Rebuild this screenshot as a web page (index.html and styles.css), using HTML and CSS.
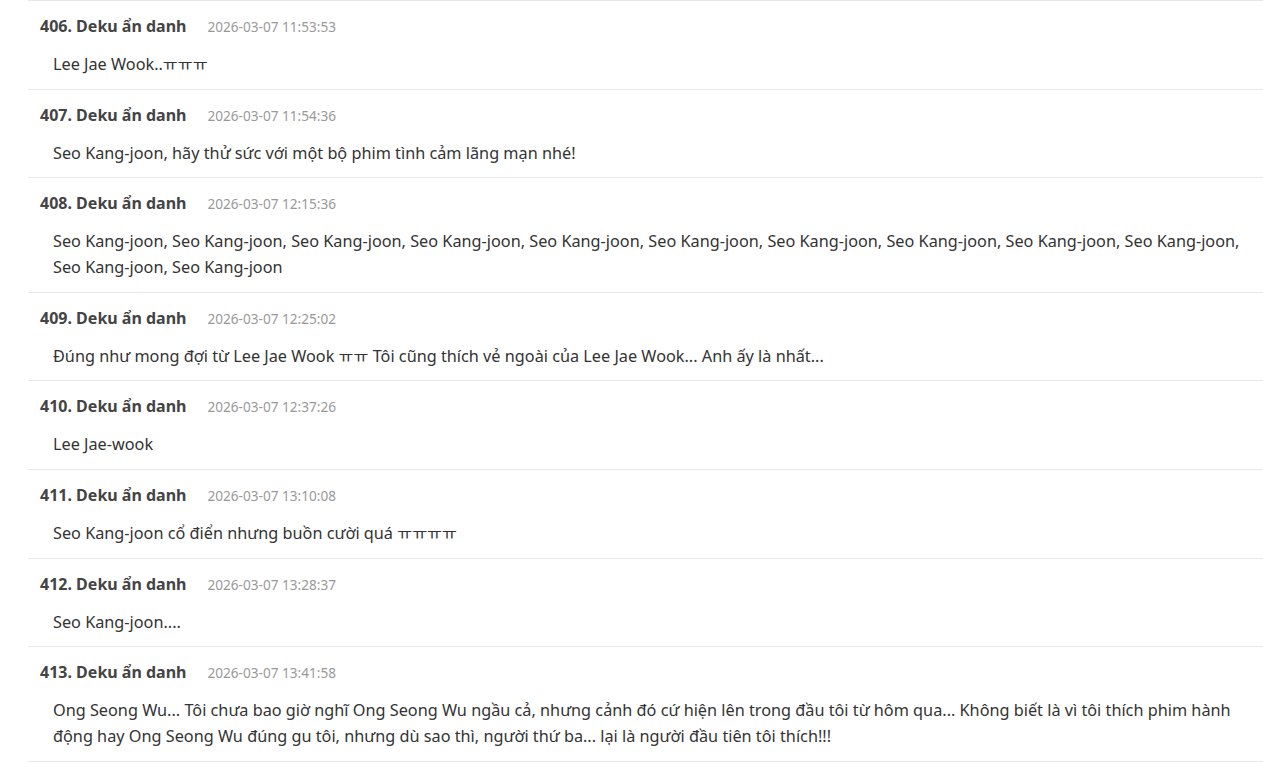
FILE: index.html
```html
<!DOCTYPE html>
<html lang="vi">
<head>
<meta charset="utf-8">
<link rel="stylesheet" href="styles.css">
</head>
<body>
<ul class="comments">
  <li class="comment first">
    <div class="meta"><span class="name">406. Deku ẩn danh</span><span class="date">2026-03-07 11:53:53</span></div>
    <p class="text">Lee Jae Wook..ㅠㅠㅠ</p>
  </li>
  <li class="comment">
    <div class="meta"><span class="name">407. Deku ẩn danh</span><span class="date">2026-03-07 11:54:36</span></div>
    <p class="text">Seo Kang-joon, hãy thử sức với một bộ phim tình cảm lãng mạn nhé!</p>
  </li>
  <li class="comment">
    <div class="meta"><span class="name">408. Deku ẩn danh</span><span class="date">2026-03-07 12:15:36</span></div>
    <p class="text">Seo Kang-joon, Seo Kang-joon, Seo Kang-joon, Seo Kang-joon, Seo Kang-joon, Seo Kang-joon, Seo Kang-joon, Seo Kang-joon, Seo Kang-joon, Seo Kang-joon, Seo Kang-joon, Seo Kang-joon</p>
  </li>
  <li class="comment">
    <div class="meta"><span class="name">409. Deku ẩn danh</span><span class="date">2026-03-07 12:25:02</span></div>
    <p class="text">Đúng như mong đợi từ Lee Jae Wook ㅠㅠ Tôi cũng thích vẻ ngoài của Lee Jae Wook... Anh ấy là nhất...</p>
  </li>
  <li class="comment">
    <div class="meta"><span class="name">410. Deku ẩn danh</span><span class="date">2026-03-07 12:37:26</span></div>
    <p class="text">Lee Jae-wook</p>
  </li>
  <li class="comment">
    <div class="meta"><span class="name">411. Deku ẩn danh</span><span class="date">2026-03-07 13:10:08</span></div>
    <p class="text">Seo Kang-joon cổ điển nhưng buồn cười quá ㅠㅠㅠㅠ</p>
  </li>
  <li class="comment">
    <div class="meta"><span class="name">412. Deku ẩn danh</span><span class="date">2026-03-07 13:28:37</span></div>
    <p class="text">Seo Kang-joon....</p>
  </li>
  <li class="comment">
    <div class="meta"><span class="name">413. Deku ẩn danh</span><span class="date">2026-03-07 13:41:58</span></div>
    <p class="text">Ong Seong Wu... Tôi chưa bao giờ nghĩ Ong Seong Wu ngầu cả, nhưng cảnh đó cứ hiện lên trong đầu tôi từ hôm qua... Không biết là vì tôi thích phim hành động hay Ong Seong Wu đúng gu tôi, nhưng dù sao thì, người thứ ba... lại là người đầu tiên tôi thích!!!</p>
  </li>
</ul>
</body>
</html>
```
FILE: styles.css
```css
html, body {
  margin: 0;
  padding: 0;
  background: #fff;
}
body {
  font-family: "Noto Sans", "Noto Sans CJK KR", sans-serif;
  color: #333;
}
.comments {
  list-style: none;
  margin: 0 0 0 28px;
  padding: 0;
  border-top: 1px solid #e8e8e8;
}
.comment {
  padding: 12px 10px 11.6px 12px;
  border-bottom: 1px solid #e8e8e8;
}
.meta {
  display: flex;
  align-items: baseline;
  gap: 21px;
  height: 26px;
  line-height: 26px;
  margin-bottom: 12px;
}
.name {
  font-weight: 700;
  font-size: 16px;
  color: #444;
}
.date {
  font-size: 13.6px;
  color: #999;
}
.text {
  margin: 0;
  padding-left: 13px;
  font-size: 16.25px;
  line-height: 26px;
  color: #333;
}
```
